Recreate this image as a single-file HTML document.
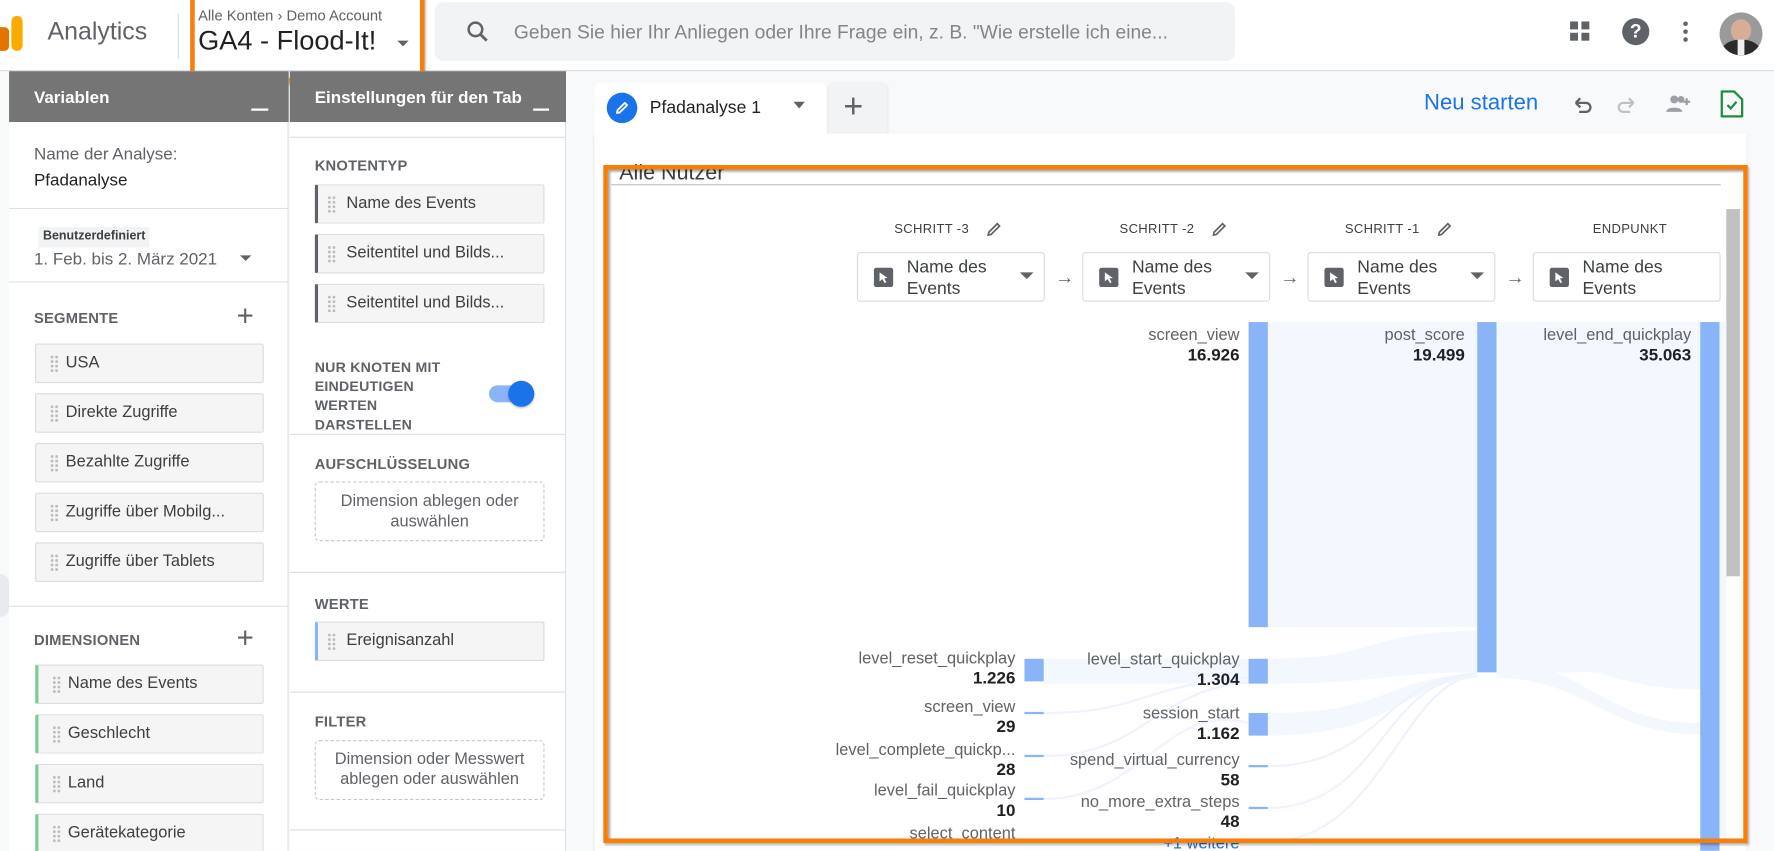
<!DOCTYPE html>
<html><head><meta charset="utf-8"><style>
*{box-sizing:border-box;margin:0;padding:0}
html,body{width:1774px;height:847px;overflow:hidden;background:#fff;font-family:"Liberation Sans",sans-serif}
#w{position:absolute;left:0;top:0;width:1577px;height:753px;transform:scale(1.132,1.13);transform-origin:0 0;background:#f8f9fa;overflow:hidden}
.a{position:absolute}
.t{position:absolute;white-space:nowrap}
.sec{font-size:13px;font-weight:bold;color:#5f6368;letter-spacing:.2px}
.item{position:absolute;height:35px;background:#f5f5f5;border:1px solid #dadce0;border-radius:2px;font-size:14.5px;color:#3c4043;line-height:33px}
.dots{position:absolute;top:9px;width:8px;height:16px;background-image:radial-gradient(circle,#bdbdbd 1.2px,transparent 1.4px);background-size:4px 4px}
.hr{position:absolute;height:1px;background:#e0e0e0}
.dash{position:absolute;border:1px dashed #c6c6c6;border-radius:4px;font-size:14.5px;color:#5f6368;text-align:center;line-height:18px}
.dd{position:absolute;top:223px;width:166px;height:44px;border:1px solid #dadce0;border-radius:3px;background:#fff}
.dd .ic{position:absolute;left:14px;top:13px;width:17px;height:17px;background:#5f6368;border-radius:2px}
.dd .ic svg{position:absolute;left:4px;top:3px}
.dd .tx{position:absolute;left:43px;top:3px;font-size:15.5px;color:#3c4043;line-height:19px}
.dd .tr{position:absolute;right:9px;top:17px;border-left:6px solid transparent;border-right:6px solid transparent;border-top:6px solid #5f6368}
.arr{position:absolute;top:236px;font-size:17px;color:#5f6368}
.st{position:absolute;top:197px;font-size:11.5px;color:#3c4043;letter-spacing:.3px}
.lb{position:absolute;text-align:right;font-size:14.5px;color:#5f6368;line-height:18px;white-space:nowrap}
.lb b{color:#202124;font-size:15px}
</style></head><body><div id="w">
<!-- header -->
<div class="a" style="left:0;top:0;width:1577px;height:63px;background:#fff;border-bottom:1px solid #dadce0"></div>
<div class="a" style="left:0;top:24px;width:8px;height:21px;background:#e37400;border-radius:0 4px 4px 0"></div>
<div class="a" style="left:10px;top:14px;width:10px;height:31px;background:#f9ab00;border-radius:5px"></div>
<div class="t" style="left:42px;top:15px;font-size:22px;color:#5f6368">Analytics</div>
<div class="a" style="left:157px;top:12px;width:1px;height:40px;background:#dadce0"></div>
<div class="t" style="left:175px;top:6px;font-size:13px;color:#5f6368">Alle Konten &#8250; Demo Account</div>
<div class="t" style="left:175px;top:23px;font-size:24px;color:#202124">GA4 - Flood-It!</div>
<div class="a" style="left:351px;top:36px;border-left:5px solid transparent;border-right:5px solid transparent;border-top:5px solid #5f6368"></div>
<div class="a" style="left:168px;top:-4px;width:207px;height:77px;border:4px solid #f97d09;box-shadow:1px 2px 2px rgba(0,0,0,.35)"></div>
<div class="a" style="left:384px;top:2px;width:707px;height:52px;background:#f1f3f4;border-radius:8px"></div>
<svg class="a" style="left:410px;top:16px" width="24" height="24" viewBox="0 0 24 24"><circle cx="10" cy="10" r="6" fill="none" stroke="#5f6368" stroke-width="2.2"/><path d="M14.5 14.5L20 20" stroke="#5f6368" stroke-width="2.5"/></svg>
<div class="t" style="left:454px;top:19px;font-size:17px;color:#80868b">Geben Sie hier Ihr Anliegen oder Ihre Frage ein, z. B. "Wie erstelle ich eine...</div>
<svg class="a" style="left:1386px;top:18px" width="20" height="20"><rect x="1" y="1" width="7" height="7" fill="#5f6368"/><rect x="11" y="1" width="7" height="7" fill="#5f6368"/><rect x="1" y="11" width="7" height="7" fill="#5f6368"/><rect x="11" y="11" width="7" height="7" fill="#5f6368"/></svg>
<div class="a" style="left:1433px;top:16px;width:24px;height:24px;border-radius:50%;background:#5f6368;color:#fff;font-weight:bold;font-size:17px;text-align:center;line-height:24px">?</div>
<div class="a" style="left:1487px;top:19px;width:4px;height:4px;border-radius:50%;background:#5f6368;box-shadow:0 7px 0 #5f6368,0 14px 0 #5f6368"></div>
<div class="a" style="left:1519px;top:11px;width:38px;height:38px;border-radius:50%;overflow:hidden;background:#9a9a9a">
 <div class="a" style="left:10px;top:6px;width:18px;height:20px;border-radius:50%;background:#d8ad98"></div>
 <div class="a" style="left:2px;top:24px;width:34px;height:20px;border-radius:50% 50% 0 0;background:#2b2b2b"></div>
 <div class="a" style="left:16px;top:24px;width:6px;height:14px;background:#eee"></div>
</div>

<!-- left strip -->
<div class="a" style="left:0;top:508px;width:8px;height:38px;background:#e8eaed;border-radius:0 19px 19px 0"></div>
<!-- panel 1 -->
<div class="a" style="left:8px;top:63px;width:247px;height:690px;background:#fff;border-right:1px solid #e0e0e0"></div>
<div class="a" style="left:8px;top:63px;width:247px;height:45px;background:#757575"></div>
<div class="t" style="left:30px;top:78px;font-size:15px;font-weight:bold;color:#fff">Variablen</div>
<div class="a" style="left:222px;top:96px;width:15px;height:2px;background:#fff"></div>
<div class="t" style="left:30px;top:128px;font-size:15px;color:#5f6368">Name der Analyse:</div>
<div class="t" style="left:30px;top:151px;font-size:15px;color:#202124">Pfadanalyse</div>
<div class="hr" style="left:8px;top:184px;width:247px"></div>
<div class="t" style="left:34px;top:201px;height:18px;padding:2px 4px;background:#f1f3f4;font-size:11px;font-weight:bold;color:#3c4043">Benutzerdefiniert</div>
<div class="t" style="left:30px;top:221px;font-size:15px;color:#5f6368">1. Feb. bis 2. März 2021</div>
<div class="a" style="left:212px;top:226px;border-left:5px solid transparent;border-right:5px solid transparent;border-top:5px solid #5f6368"></div>
<div class="hr" style="left:8px;top:249px;width:247px"></div>
<div class="t sec" style="left:30px;top:274px">SEGMENTE</div>
<div class="t" style="left:209px;top:264px;font-size:26px;color:#5f6368;font-weight:300">+</div>
<div class="item" style="left:31px;top:304px;width:202px"><div class="dots" style="left:12px"></div><span style="position:absolute;left:26px">USA</span></div>
<div class="item" style="left:31px;top:348px;width:202px"><div class="dots" style="left:12px"></div><span style="position:absolute;left:26px">Direkte Zugriffe</span></div>
<div class="item" style="left:31px;top:392px;width:202px"><div class="dots" style="left:12px"></div><span style="position:absolute;left:26px">Bezahlte Zugriffe</span></div>
<div class="item" style="left:31px;top:436px;width:202px"><div class="dots" style="left:12px"></div><span style="position:absolute;left:26px">Zugriffe über Mobilg...</span></div>
<div class="item" style="left:31px;top:480px;width:202px"><div class="dots" style="left:12px"></div><span style="position:absolute;left:26px">Zugriffe über Tablets</span></div>
<div class="hr" style="left:8px;top:536px;width:247px"></div>
<div class="t sec" style="left:30px;top:559px">DIMENSIONEN</div>
<div class="t" style="left:209px;top:549px;font-size:26px;color:#5f6368;font-weight:300">+</div>
<div class="item" style="left:31px;top:588px;width:202px;border-left:3px solid #81c995"><div class="dots" style="left:12px"></div><span style="position:absolute;left:26px">Name des Events</span></div>
<div class="item" style="left:31px;top:632px;width:202px;border-left:3px solid #81c995"><div class="dots" style="left:12px"></div><span style="position:absolute;left:26px">Geschlecht</span></div>
<div class="item" style="left:31px;top:676px;width:202px;border-left:3px solid #81c995"><div class="dots" style="left:12px"></div><span style="position:absolute;left:26px">Land</span></div>
<div class="item" style="left:31px;top:720px;width:202px;border-left:3px solid #81c995"><div class="dots" style="left:12px"></div><span style="position:absolute;left:26px">Gerätekategorie</span></div>

<!-- panel 2 -->
<div class="a" style="left:256px;top:63px;width:244px;height:690px;background:#fff;border-right:1px solid #e0e0e0"></div>
<div class="a" style="left:256px;top:63px;width:244px;height:45px;background:#757575"></div>
<div class="t" style="left:278px;top:78px;font-size:15px;font-weight:bold;color:#fff">Einstellungen für den Tab</div>
<div class="a" style="left:471px;top:96px;width:14px;height:2px;background:#fff"></div>
<div class="hr" style="left:256px;top:121px;width:244px"></div>
<div class="t sec" style="left:278px;top:139px">KNOTENTYP</div>
<div class="item" style="left:278px;top:163px;width:203px;border-left:3px solid #5f6368"><div class="dots" style="left:8px"></div><span style="position:absolute;left:25px">Name des Events</span></div>
<div class="item" style="left:278px;top:207px;width:203px;border-left:3px solid #5f6368"><div class="dots" style="left:8px"></div><span style="position:absolute;left:25px">Seitentitel und Bilds...</span></div>
<div class="item" style="left:278px;top:251px;width:203px;border-left:3px solid #5f6368"><div class="dots" style="left:8px"></div><span style="position:absolute;left:25px">Seitentitel und Bilds...</span></div>
<div class="t sec" style="left:278px;top:317px;line-height:17px;font-size:12.5px">NUR KNOTEN MIT<br>EINDEUTIGEN<br>WERTEN<br>DARSTELLEN</div>
<div class="a" style="left:432px;top:341px;width:36px;height:15px;border-radius:8px;background:#8ab4f8"></div>
<div class="a" style="left:449px;top:337px;width:23px;height:23px;border-radius:50%;background:#1a73e8;box-shadow:0 1px 2px rgba(0,0,0,.3)"></div>
<div class="hr" style="left:256px;top:384px;width:244px"></div>
<div class="t sec" style="left:278px;top:403px">AUFSCHLÜSSELUNG</div>
<div class="dash" style="left:278px;top:426px;width:203px;height:53px;padding-top:8px">Dimension ablegen oder<br>auswählen</div>
<div class="hr" style="left:256px;top:506px;width:244px"></div>
<div class="t sec" style="left:278px;top:527px">WERTE</div>
<div class="item" style="left:278px;top:550px;width:203px;border-left:3px solid #8ab4f8"><div class="dots" style="left:8px"></div><span style="position:absolute;left:25px">Ereignisanzahl</span></div>
<div class="hr" style="left:256px;top:612px;width:244px"></div>
<div class="t sec" style="left:278px;top:631px">FILTER</div>
<div class="dash" style="left:278px;top:655px;width:203px;height:53px;padding-top:7px">Dimension oder Messwert<br>ablegen oder auswählen</div>
<div class="hr" style="left:256px;top:734px;width:244px"></div>

<!-- main -->
<div class="a" style="left:525px;top:73px;width:205px;height:50px;background:#fff;border-radius:6px 6px 0 0"></div>
<div class="a" style="left:536px;top:82px;width:27px;height:27px;border-radius:50%;background:#1a73e8"></div>
<svg class="a" style="left:541px;top:87px" width="17" height="17" viewBox="0 0 17 17"><path d="M4 13L4.5 10.5L11 4L13 6L6.5 12.5Z" fill="none" stroke="#fff" stroke-width="1.6" stroke-linejoin="round"/></svg>
<div class="t" style="left:574px;top:87px;font-size:15.5px;color:#202124">Pfadanalyse 1</div>
<div class="a" style="left:701px;top:90px;border-left:5px solid transparent;border-right:5px solid transparent;border-top:6px solid #5f6368"></div>
<div class="a" style="left:732px;top:73px;width:52px;height:45px;background:#f1f3f4;border-radius:5px 5px 0 0;box-shadow:0 1px 2px rgba(0,0,0,.15)"></div>
<div class="t" style="left:745px;top:78px;font-size:30px;font-weight:300;color:#5f6368">+</div>
<div class="t" style="left:1258px;top:80px;font-size:19.5px;color:#1a73e8">Neu starten</div>
<svg class="a" style="left:1387px;top:82px" width="22" height="22" viewBox="0 0 22 22"><path d="M5 9H14A4 4 0 0 1 14 17H8M5 9L9 5M5 9L9 13" fill="none" stroke="#5f6368" stroke-width="2"/></svg>
<svg class="a" style="left:1426px;top:82px" width="22" height="22" viewBox="0 0 22 22"><path d="M17 9H8A4 4 0 0 0 8 17H14M17 9L13 5M17 9L13 13" fill="none" stroke="#bdc1c6" stroke-width="2"/></svg>
<svg class="a" style="left:1471px;top:82px" width="26" height="20" viewBox="0 0 26 20"><circle cx="8" cy="6" r="3.5" fill="#9aa0a6"/><path d="M1 17C1 12 15 12 15 17Z" fill="#9aa0a6"/><circle cx="14" cy="6" r="3" fill="#9aa0a6"/><path d="M19 5V11M16 8H22" stroke="#9aa0a6" stroke-width="2"/></svg>
<svg class="a" style="left:1519px;top:79px" width="22" height="26" viewBox="0 0 22 26"><path d="M2 2H13L20 9V24H2Z" fill="none" stroke="#1e8e3e" stroke-width="2" stroke-linejoin="round"/><path d="M7 14L10 17L15 11" fill="none" stroke="#1e8e3e" stroke-width="2"/></svg>

<div class="a" style="left:525px;top:118px;width:1018px;height:640px;background:#fff;box-shadow:0 1px 2px rgba(0,0,0,.15)"></div>
<div class="t" style="left:547px;top:143px;font-size:19px;color:#3c4043">Alle Nutzer</div>
<div class="a" style="left:540px;top:163px;width:980px;height:1px;background:#bdbdbd"></div>
<div class="a" style="left:1525px;top:185px;width:12px;height:325px;background:#c1c1c1"></div>

<div class="st" style="left:790px">SCHRITT -3</div>
<div class="st" style="left:989px">SCHRITT -2</div>
<div class="st" style="left:1188px">SCHRITT -1</div>
<div class="st" style="left:1407px">ENDPUNKT</div>
<svg class="a" style="left:870px;top:195px" width="16" height="16" viewBox="0 0 16 16"><path d="M3 13L3.5 10.5L11 3L13 5L5.5 12.5Z" fill="none" stroke="#5f6368" stroke-width="1.5"/></svg>
<svg class="a" style="left:1069px;top:195px" width="16" height="16" viewBox="0 0 16 16"><path d="M3 13L3.5 10.5L11 3L13 5L5.5 12.5Z" fill="none" stroke="#5f6368" stroke-width="1.5"/></svg>
<svg class="a" style="left:1268px;top:195px" width="16" height="16" viewBox="0 0 16 16"><path d="M3 13L3.5 10.5L11 3L13 5L5.5 12.5Z" fill="none" stroke="#5f6368" stroke-width="1.5"/></svg>
<div class="dd" style="left:757px"><div class="ic"><svg width="10" height="11" viewBox="0 0 10 11"><path d="M1 1L1 9L3.5 7L5.5 10.5L7 9.7L5 6.3L8 6Z" fill="#fff"/></svg></div><div class="tx">Name des<br>Events</div><div class="tr"></div></div>
<div class="dd" style="left:956px"><div class="ic"><svg width="10" height="11" viewBox="0 0 10 11"><path d="M1 1L1 9L3.5 7L5.5 10.5L7 9.7L5 6.3L8 6Z" fill="#fff"/></svg></div><div class="tx">Name des<br>Events</div><div class="tr"></div></div>
<div class="dd" style="left:1155px"><div class="ic"><svg width="10" height="11" viewBox="0 0 10 11"><path d="M1 1L1 9L3.5 7L5.5 10.5L7 9.7L5 6.3L8 6Z" fill="#fff"/></svg></div><div class="tx">Name des<br>Events</div><div class="tr"></div></div>
<div class="dd" style="left:1354px"><div class="ic"><svg width="10" height="11" viewBox="0 0 10 11"><path d="M1 1L1 9L3.5 7L5.5 10.5L7 9.7L5 6.3L8 6Z" fill="#fff"/></svg></div><div class="tx">Name des<br>Events</div></div>
<div class="arr" style="left:932px">&#8594;</div>
<div class="arr" style="left:1131px">&#8594;</div>
<div class="arr" style="left:1330px">&#8594;</div>

<!-- sankey -->
<svg class="a" style="left:0;top:0" width="1577" height="753">
<g fill="#f3f7fe">
<rect x="1120" y="285" width="185" height="270"/>
<rect x="1322" y="285" width="180" height="310"/>
<rect x="1519" y="285" width="6" height="460"/>
<path d="M922 583H1103V605H922Z"/>
<path d="M1120 583C1220 583 1200 560 1305 558V595C1220 595 1220 605 1120 605Z"/>
<path d="M1120 631C1230 631 1220 600 1305 596V600C1240 605 1230 651 1120 651Z"/>
<path d="M1322 558C1400 570 1430 595 1502 595V610C1420 610 1400 580 1322 580Z"/>
<path d="M1322 580C1400 590 1420 640 1502 640V650C1420 650 1400 600 1322 600Z"/>
</g>
<g fill="none" stroke="#eef3fd" stroke-width="2">
<path d="M922 631C1010 631 1010 605 1103 600"/>
<path d="M922 669C1010 669 1020 610 1103 604"/>
<path d="M922 707C1010 707 1030 620 1103 640"/>
<path d="M1120 678C1220 678 1220 600 1305 596"/>
<path d="M1120 715C1220 715 1220 600 1305 597"/>
<path d="M1120 745C1220 745 1240 600 1305 598"/>
</g>
<g fill="#8ab4f8">
<rect x="1103" y="285" width="17" height="270"/>
<rect x="1305" y="285" width="17" height="310"/>
<rect x="1502" y="285" width="17" height="470"/>
<rect x="905" y="583" width="17" height="20"/>
<rect x="905" y="630" width="17" height="2"/>
<rect x="905" y="668" width="17" height="2"/>
<rect x="905" y="706" width="17" height="2"/>
<rect x="1103" y="583" width="17" height="22"/>
<rect x="1103" y="631" width="17" height="20"/>
<rect x="1103" y="677" width="17" height="2"/>
<rect x="1103" y="714" width="17" height="2"/>
</g>
</svg>
<div class="lb" style="right:482px;top:288px">screen_view<br><b>16.926</b></div>
<div class="lb" style="right:283px;top:288px">post_score<br><b>19.499</b></div>
<div class="lb" style="right:83px;top:288px">level_end_quickplay<br><b>35.063</b></div>
<div class="lb" style="right:680px;top:574px">level_reset_quickplay<br><b>1.226</b></div>
<div class="lb" style="right:680px;top:617px">screen_view<br><b>29</b></div>
<div class="lb" style="right:680px;top:655px">level_complete_quickp...<br><b>28</b></div>
<div class="lb" style="right:680px;top:691px">level_fail_quickplay<br><b>10</b></div>
<div class="lb" style="right:680px;top:729px">select_content</div>
<div class="lb" style="right:482px;top:575px">level_start_quickplay<br><b>1.304</b></div>
<div class="lb" style="right:482px;top:623px">session_start<br><b>1.162</b></div>
<div class="lb" style="right:482px;top:664px">spend_virtual_currency<br><b>58</b></div>
<div class="lb" style="right:482px;top:701px">no_more_extra_steps<br><b>48</b></div>
<div class="lb" style="right:482px;top:738px;color:#1a73e8">+1 weitere</div>

<div class="a" style="left:533px;top:146px;width:1011px;height:600px;border:4px solid #f97d09;box-shadow:inset 2px 2px 2px rgba(0,0,0,.35),1px 2px 2px rgba(0,0,0,.3)"></div>
</div></body></html>
